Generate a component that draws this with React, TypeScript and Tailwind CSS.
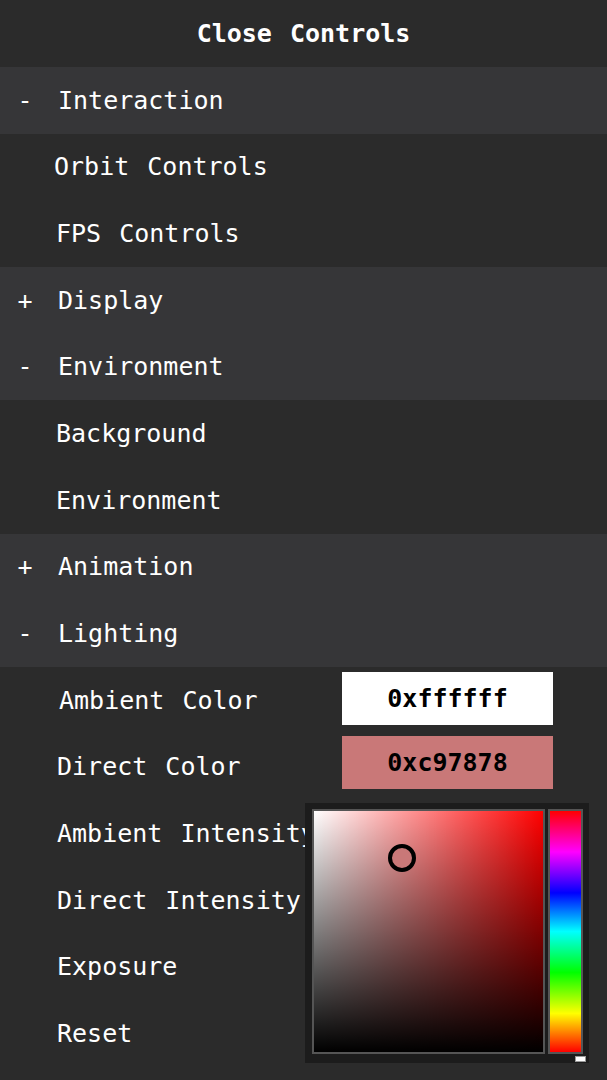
import React from "react";

const font = "font-['DejaVu_Sans_Mono','Liberation_Mono',monospace]";

function Folder({ sign, label }: { sign: string; label: string }) {
  return (
    <div className="h-[66.67px] bg-[#363638] flex items-center pl-[10px]">
      <span className="w-[30px] text-center">{sign}</span>
      <span className="ml-[18px]">{label}</span>
    </div>
  );
}

function Item({ label, pl = "pl-[56px]" }: { label: string; pl?: string }) {
  return (
    <div className={`h-[66.67px] bg-[#2b2b2b] flex items-center ${pl}`}>
      <span>{label}</span>
    </div>
  );
}

function ColorRow({ label, value, bg, mt, pl }: { label: string; value: string; bg: string; mt: string; pl: string }) {
  return (
    <div className={`h-[66.67px] bg-[#2b2b2b] flex items-center justify-between pr-[54px] ${pl}`}>
      <span>{label}</span>
      <div className={`self-start w-[211px] h-[53px] flex items-center justify-center font-bold text-black ${mt} ${bg}`}>
        {value}
      </div>
    </div>
  );
}

export default function App() {
  return (
    <div className={`relative w-[607px] h-[1080px] bg-[#2b2b2b] text-white text-[25px] leading-none [word-spacing:3px] ${font}`}>
      <div className="h-[67px] flex items-center justify-center font-bold bg-[#2b2b2b]">
        Close Controls
      </div>
      <Folder sign="-" label="Interaction" />
      <Item label="Orbit Controls" pl="pl-[54px]" />
      <Item label="FPS Controls" />
      <Folder sign="+" label="Display" />
      <Folder sign="-" label="Environment" />
      <Item label="Background" />
      <Item label="Environment" />
      <Folder sign="+" label="Animation" />
      <Folder sign="-" label="Lighting" />
      <ColorRow label="Ambient Color" value="0xffffff" bg="bg-white" mt="mt-[5px]" pl="pl-[59px]" />
      <ColorRow label="Direct Color" value="0xc97878" bg="bg-[#c97878]" mt="mt-[2px]" pl="pl-[57px]" />
      <Item label="Ambient Intensity" pl="pl-[57px]" />
      <Item label="Direct Intensity" pl="pl-[57px]" />
      <Item label="Exposure" pl="pl-[57px]" />
      <Item label="Reset" pl="pl-[57px]" />

      {/* color picker popup */}
      <div className="absolute left-[305px] top-[803px] w-[284px] h-[260px] bg-[#1c1c1c]">
        <div className="absolute left-[7px] top-[6px] w-[233px] h-[245px] border-2 border-[#555] bg-[#ff0000]">
          <div className="absolute inset-0 bg-[linear-gradient(to_right,#ffffff,rgba(255,255,255,0))]" />
          <div className="absolute inset-0 bg-[linear-gradient(to_bottom,rgba(0,0,0,0),#000000)]" />
          <div className="absolute left-[74px] top-[33px] w-[28px] h-[28px] rounded-full border-[4px] border-black bg-[#c97878]" />
        </div>
        <div className="absolute left-[243px] top-[6px] w-[35px] h-[245px] border-2 border-[#555] bg-[linear-gradient(to_bottom,#ff0000_0%,#ff00ff_17%,#0000ff_34%,#00ffff_50%,#00ff00_67%,#ffff00_84%,#ff0000_100%)]" />
        <div className="absolute left-[270px] top-[253px] w-[11px] h-[6px] bg-white border border-[#999]" />
      </div>
    </div>
  );
}
